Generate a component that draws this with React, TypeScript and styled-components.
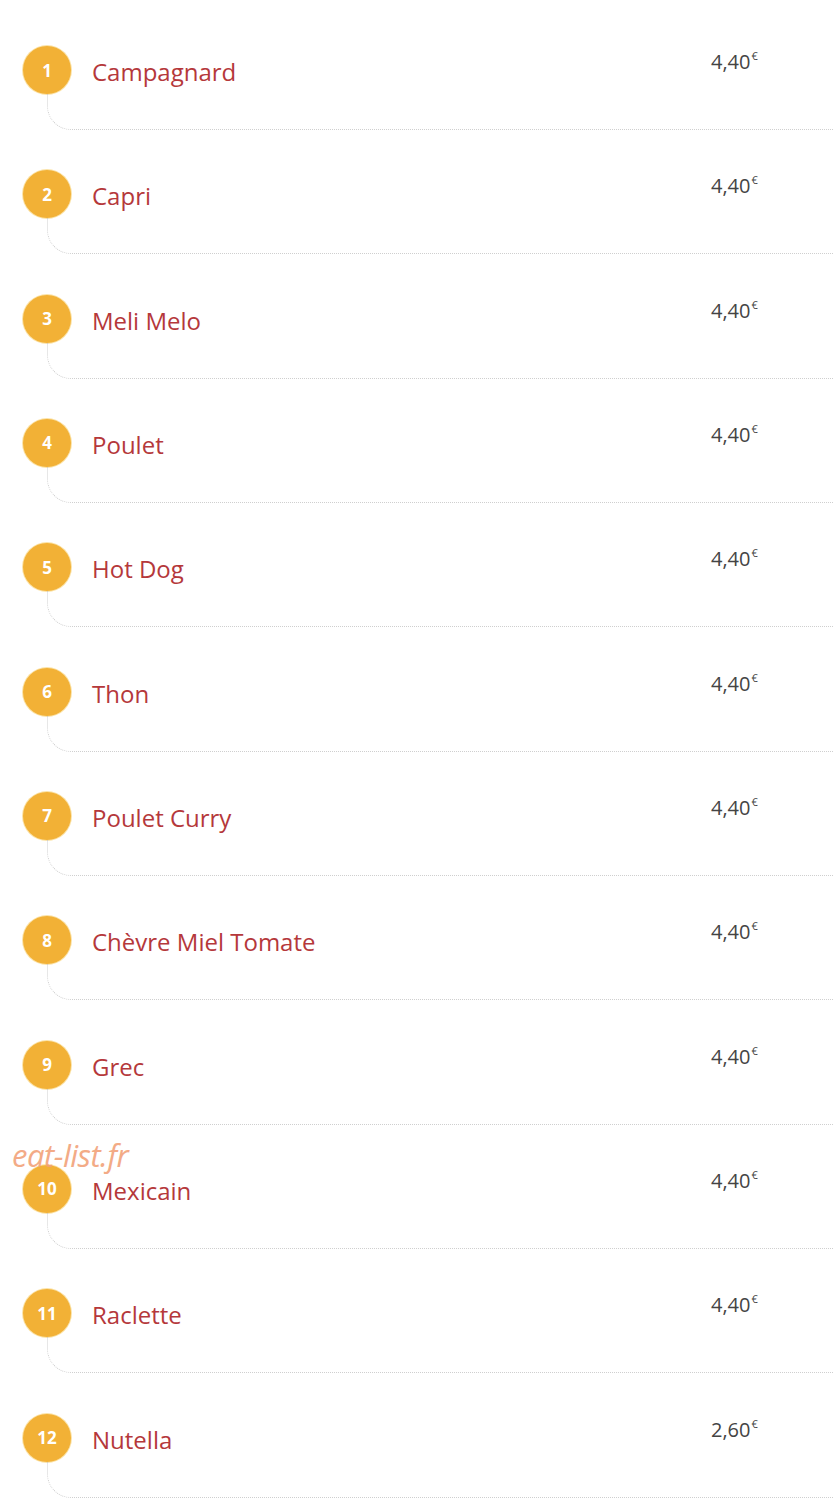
import styled, { createGlobalStyle } from "styled-components";

const GlobalStyle = createGlobalStyle`
  body {
    margin: 0;
    background: #ffffff;
    font-family: "Open Sans", "Liberation Sans", sans-serif;
  }
`;

const Page = styled.div`
  position: relative;
  width: 833px;
  padding: 46px 0 0 23px;
  box-sizing: border-box;
`;

const Item = styled.div`
  height: 124.33px;
  display: flex;
  flex-direction: column;
`;

const Head = styled.div`
  display: flex;
  align-items: flex-start;
  height: 48px;
`;

const Badge = styled.div`
  width: 48px;
  height: 48px;
  flex: none;
  border-radius: 50%;
  background: #f2b136;
  box-shadow: 0 0 0 1px #fbe3a8;
  color: #ffffff;
  font-weight: 700;
  font-size: 17px;
  display: flex;
  align-items: center;
  justify-content: center;
`;

const Name = styled.div`
  flex: 1;
  margin-left: 21px;
  margin-top: 10px;
  font-size: 24px;
  line-height: 32px;
  color: #b5383b;
`;

const Price = styled.div`
  width: 122px;
  margin-top: -3px;
  font-size: 20px;
  line-height: 26px;
  color: #444444;

  sup {
    font-size: 11px;
    vertical-align: 9px;
    margin-left: 1px;
  }
`;

const Connector = styled.div`
  margin-left: 24px;
  height: 35px;
  border-left: 1px dotted #cfcfcf;
  border-bottom: 1px dotted #cfcfcf;
  border-bottom-left-radius: 24px;
`;

const Watermark = styled.div`
  position: absolute;
  left: 12px;
  top: 1134px;
  font-size: 31px;
  font-style: italic;
  color: #f2a27a;
  opacity: 0.9;
  letter-spacing: -0.5px;
  z-index: 2;
`;

const items = [
  ["Campagnard", "4,40"],
  ["Capri", "4,40"],
  ["Meli Melo", "4,40"],
  ["Poulet", "4,40"],
  ["Hot Dog", "4,40"],
  ["Thon", "4,40"],
  ["Poulet Curry", "4,40"],
  ["Chèvre Miel Tomate", "4,40"],
  ["Grec", "4,40"],
  ["Mexicain", "4,40"],
  ["Raclette", "4,40"],
  ["Nutella", "2,60"],
];

export default function App() {
  return (
    <>
      <GlobalStyle />
      <Page>
        {items.map(([name, price], i) => (
          <Item key={name}>
            <Head>
              <Badge>{i + 1}</Badge>
              <Name>{name}</Name>
              <Price>
                {price}
                <sup>€</sup>
              </Price>
            </Head>
            <Connector />
          </Item>
        ))}
        <Watermark>eat-list.fr</Watermark>
      </Page>
    </>
  );
}
